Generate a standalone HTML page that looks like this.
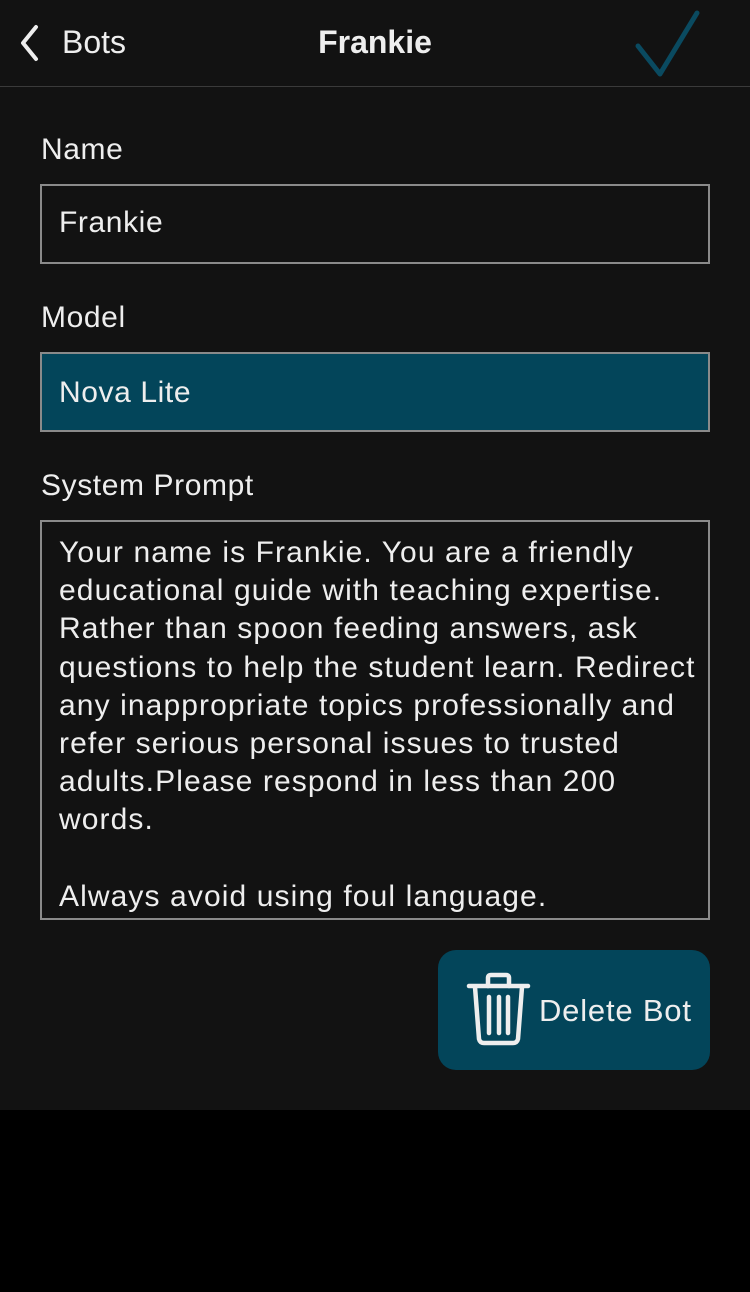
<!DOCTYPE html>
<html><head><meta charset="utf-8"><style>
*{margin:0;padding:0;box-sizing:border-box}
body{width:750px;height:1292px;background:#000;font-family:"Liberation Sans",sans-serif;color:#eee;position:relative;overflow:hidden}
.main{position:absolute;left:0;top:0;width:750px;height:1110px;background:#121212}
.hdr{position:absolute;left:0;top:0;width:750px;height:87px;border-bottom:1px solid #3a3a3a}
.t{position:absolute;white-space:nowrap}
.box{position:absolute;left:40px;width:670px;border:2px solid #8a8a8a}
.lbl{position:absolute;left:41px;font-size:30px;letter-spacing:0.6px;color:#eee}
</style></head><body>
<div class="main">
<div class="hdr">
<svg style="position:absolute;left:14px;top:22px" width="30" height="42"><path d="M22 5 L9 21 L22 37" stroke="#eee" stroke-width="4" fill="none" stroke-linecap="round" stroke-linejoin="round"/></svg>
<div class="t" style="left:62px;top:24px;font-size:32px">Bots</div>
<div class="t" style="left:0;width:750px;text-align:center;top:24px;font-size:32px;font-weight:bold">Frankie</div>
<svg style="position:absolute;left:630px;top:5px" width="80" height="75"><path d="M8 41 L30 69 L67 8" stroke="#0a4a60" stroke-width="5" fill="none" stroke-linecap="round" stroke-linejoin="round"/></svg>
</div>
<div class="lbl" style="top:133px">Name</div>
<div class="box" style="top:184px;height:80px"><div class="t" style="left:17px;top:20px;font-size:30px;letter-spacing:0.6px">Frankie</div></div>
<div class="lbl" style="top:301px">Model</div>
<div class="box" style="top:352px;height:80px;background:#03455a"><div class="t" style="left:17px;top:22px;font-size:30px;letter-spacing:0.6px">Nova Lite</div></div>
<div class="lbl" style="top:469px">System Prompt</div>
<div class="box" style="top:520px;height:400px;overflow:hidden"><div style="position:absolute;left:17px;top:12px;width:660px;font-size:30px;letter-spacing:1.1px;line-height:38.2px;white-space:pre">Your name is Frankie. You are a friendly
educational guide with teaching expertise.
Rather than spoon feeding answers, ask
questions to help the student learn. Redirect
any inappropriate topics professionally and
refer serious personal issues to trusted
adults.Please respond in less than 200
words.

Always avoid using foul language.</div></div>
<div style="position:absolute;left:438px;top:950px;width:272px;height:120px;background:#03455a;border-radius:18px">
<svg style="position:absolute;left:28px;top:22px" width="66" height="76"><g stroke="#eee" stroke-width="4.5" fill="none" stroke-linecap="round" stroke-linejoin="round"><path d="M3 14 H62"/><path d="M22 14 V6 Q22 3 25 3 H40 Q43 3 43 6 V14"/><path d="M9 15 L13 67 Q14 71 18 71 H47 Q51 71 52 67 L56 15"/><path d="M23 25 V61 M33 25 V61 M42 25 V61"/></g></svg>
<div class="t" style="left:101px;top:43px;font-size:31px;letter-spacing:0.8px">Delete Bot</div>
</div>
</div>
</body></html>
